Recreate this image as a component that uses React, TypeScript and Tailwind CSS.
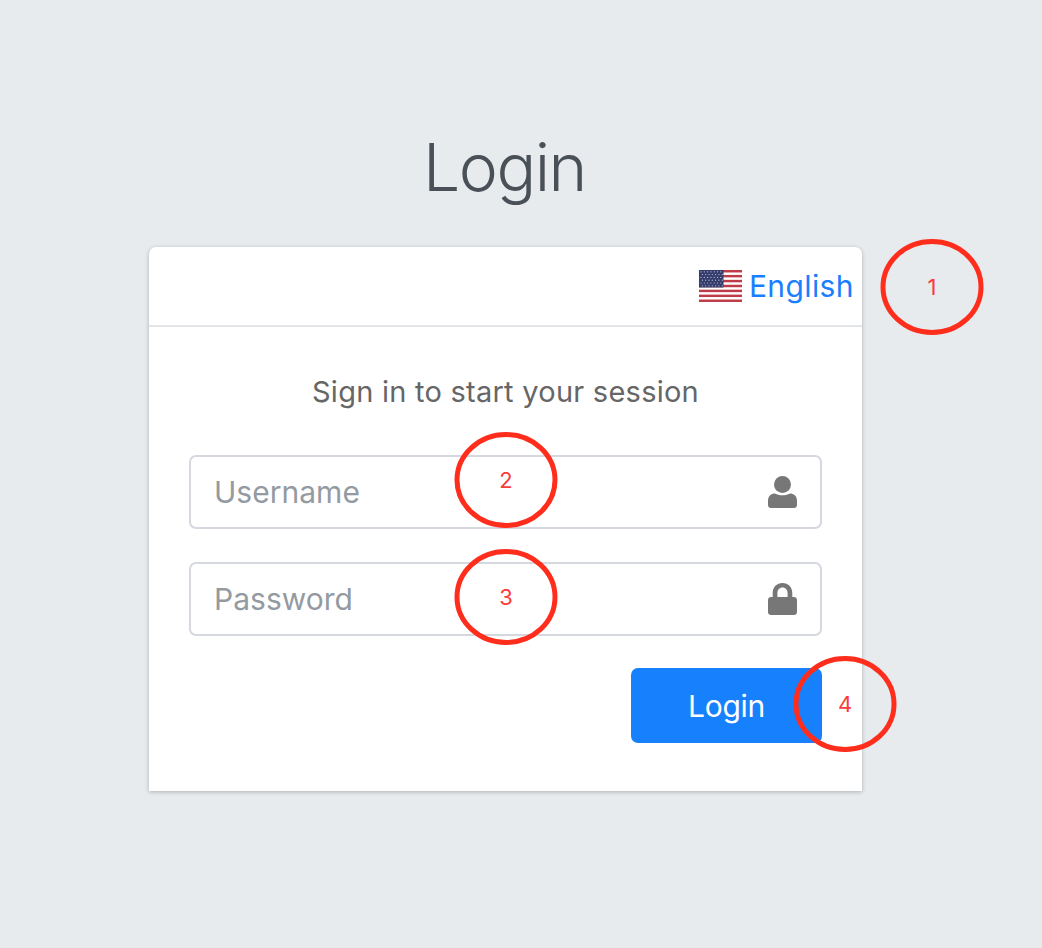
const font = {fontFamily: 'Inter, "Liberation Sans", Arial, sans-serif'}

function Flag() {
    const stripes = [0, 1, 2, 3, 4, 5, 6]
    const dots = []
    for (let r = 0; r < 6; r++) {
        for (let c = 0; c < 7; c++) {
            dots.push(<circle key={r + "-" + c} cx={2 + c * 3.3 + (r % 2) * 1.4} cy={1.8 + r * 2.8} r={0.6} fill="#c6cbdc"/>)
        }
    }
    return <svg width="43" height="32" viewBox="0 0 43 32" className="shrink-0">
        <rect width="43" height="32" fill="#fff"/>
        {stripes.map(i => <rect key={i} x="0" y={i * 4.92} width="43" height="2.46" fill="#bd3c48"/>)}
        <rect width="24.5" height="17.5" fill="#333c6b"/>
        {dots}
    </svg>
}

function UserIcon() {
    return <svg width="29" height="32" viewBox="0 0 29 32" fill="#777777">
        <circle cx="14.5" cy="8.5" r="8.5"/>
        <path d="M0 24.5C0 20 3.5 17.5 7 17.5C9 18.7 11.5 19.3 14.5 19.3C17.5 19.3 20 18.7 22 17.5C25.5 17.5 29 20 29 24.5V29C29 30.7 27.7 32 26 32H3C1.3 32 0 30.700 0 29Z"/>
    </svg>
}

function LockIcon() {
    return <svg width="29" height="32" viewBox="0 0 29 32" fill="#777777">
        <path d="M14.500 0C8.700 0 4.700 4.300 4.700 10V14H3C1.300 14 0 15.300 0 17V29C0 30.700 1.300 32 3 32H26C27.700 32 29 30.700 29 29V17C29 15.300 27.700 14 26 14H24.300V10C24.300 4.300 20.300 0 14.500 0ZM14.500 4.500C17.800 4.500 19.600 7 19.600 10V14H9.400V10C9.400 7 11.200 4.500 14.500 4.500Z" fillRule="evenodd"/>
    </svg>
}

function Field({placeholder, icon}: {placeholder: string, icon: React.ReactNode}) {
    return <div className="flex h-[74px] items-center justify-between rounded-[7px] border-2 border-[#d5d8de] bg-white pl-[23px] pr-[23px]">
        <span className="pt-[1px] text-[30px] tracking-[0.02px] text-[#949aa1]">{placeholder}</span>
        {icon}
    </div>
}

function Mark({n, x, y}: {n: number, x: number, y: number}) {
    // red hand-drawn annotation over the form
    return <div className="pointer-events-none absolute h-[96px] w-[104px]" style={{left: x - 52, top: y - 48}}>
        <svg width="104" height="96" viewBox="0 0 104 96" className="block">
            <ellipse cx="52" cy="48" rx="49" ry="45.5" fill="none" stroke="#ff2d1c" strokeWidth="5"/>
        </svg>
        <span className="absolute inset-0 flex items-center justify-center text-[22px] text-[#fb3c3c]">{n}</span>
    </div>
}

export default function App() {
    return <div style={font} className="relative h-[948px] w-[1042px] overflow-hidden bg-[#e8ebee] pl-[149px] pt-[123px]">
        <div className="w-[713px]">
            <h1 className="pr-[2px] text-center text-[66px] font-light leading-[88px] tracking-[-1.5px] text-[#495057]">Login</h1>

            <div className="mt-[36px] h-[544px] rounded-t-[7px] bg-white shadow-[0_1px_4px_rgba(0,0,0,0.25)]">
                <div className="flex h-[80px] items-center justify-end gap-[7px] border-b-2 border-[#e3e5e8] pr-[8px]">
                    <Flag/>
                    <a className="pt-[1px] text-[30px] tracking-[0.4px] text-[#1a7fff]">English</a>
                </div>

                <div className="px-[40px] pt-[47px]">
                    <p className="text-center text-[29px] leading-[36px] tracking-[0.25px] text-[#666666]">Sign in to start your session</p>

                    <div className="mt-[45px] flex flex-col gap-[33px]">
                        <Field placeholder="Username" icon={<UserIcon/>}/>
                        <Field placeholder="Password" icon={<LockIcon/>}/>
                    </div>

                    <div className="mt-[32px] flex justify-end">
                        <button className="h-[75px] w-[191px] rounded-[7px] bg-[#1780fd] pt-[2px] text-[30px] tracking-[-0.3px] text-white">Login</button>
                    </div>
                </div>
            </div>
        </div>

        <Mark n={1} x={932} y={287}/>
        <Mark n={2} x={506} y={480}/>
        <Mark n={3} x={506} y={597}/>
        <Mark n={4} x={845} y={704}/>
    </div>
}
